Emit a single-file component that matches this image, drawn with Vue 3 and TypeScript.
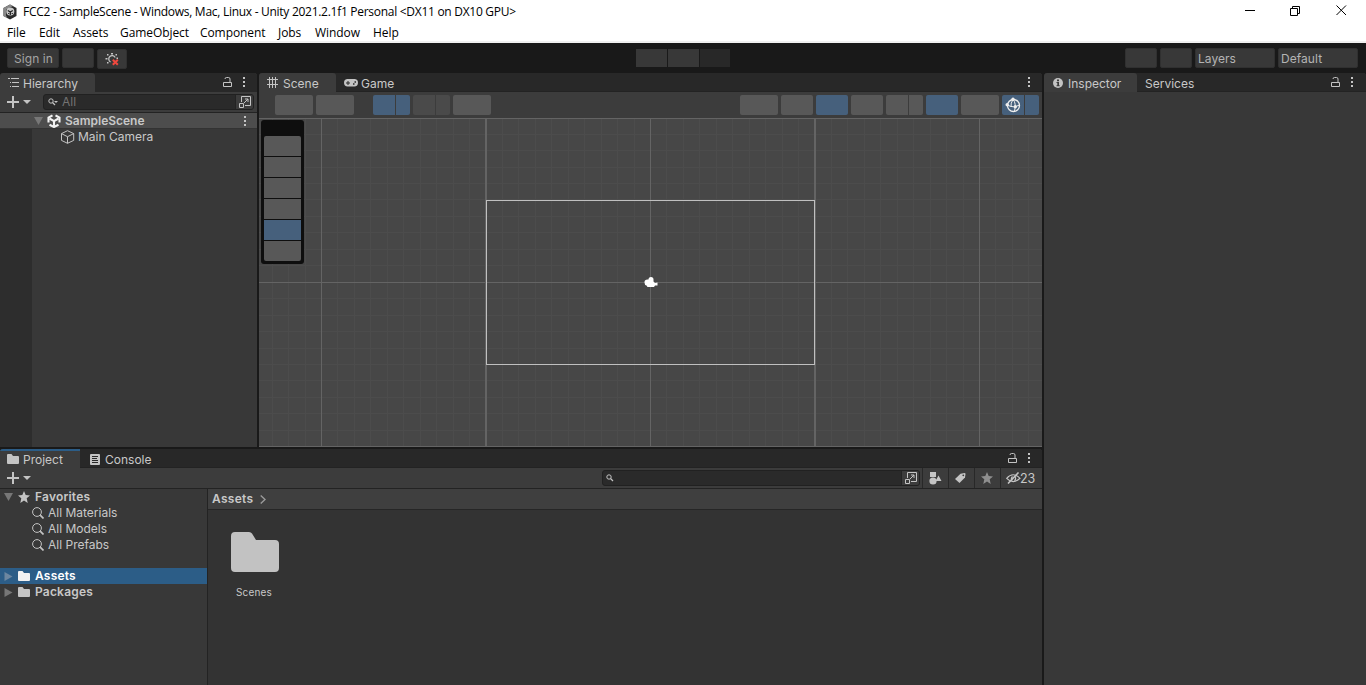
<script setup lang="ts">
interface Btn { w: number; gap: number; tone: string }

const menus = [
  { label: 'File', w: 32 }, { label: 'Edit', w: 34 }, { label: 'Assets', w: 47 },
  { label: 'GameObject', w: 80 }, { label: 'Component', w: 78 }, { label: 'Jobs', w: 37 },
  { label: 'Window', w: 58 }, { label: 'Help', w: 40 },
]

const leftTools: Btn[] = [
  { w: 38, gap: 0, tone: 'grey' }, { w: 38, gap: 3, tone: 'grey' },
  { w: 22, gap: 19, tone: 'blue l' }, { w: 14, gap: 1, tone: 'blue r' },
  { w: 22, gap: 3, tone: 'dim l' }, { w: 14, gap: 1, tone: 'dim r' },
  { w: 38, gap: 3, tone: 'grey' },
]
const rightTools: Btn[] = [
  { w: 38, gap: 0, tone: 'grey' }, { w: 32, gap: 3, tone: 'grey' },
  { w: 32, gap: 3, tone: 'blue' }, { w: 32, gap: 3, tone: 'grey' },
  { w: 22, gap: 3, tone: 'grey l' }, { w: 14, gap: 1, tone: 'grey r' },
  { w: 32, gap: 3, tone: 'blue' }, { w: 38, gap: 3, tone: 'grey' },
]
const sideTools = ['', '', '', '', 'on', '']
const searches = ['All Materials', 'All Models', 'All Prefabs']

// Scene grid, in view coordinates (origin at the viewport's top left corner)
const step = 16.45
const cx = 391.5
const cy = 164.2
const minorX = Array.from({ length: 49 }, (_, i) => Math.floor(cx + (i - 24) * step)).filter(v => v > 0 && v < 783)
const minorY = Array.from({ length: 21 }, (_, i) => Math.floor(cy + (i - 10) * step)).filter(v => v > 0 && v < 327)
const rootGrid = [
  { x: 62, w: 1 }, { x: 226, w: 2 }, { x: 391, w: 1 }, { x: 555, w: 2 }, { x: 720, w: 1 },
]
</script>

<template>
  <div class="app">
    <header class="titlebar">
      <svg class="logo" width="14" height="16" viewBox="0 0 14 16">
        <path d="M7 .5 13.500 4v8L7 15.500.5 12V4z" fill="#2a2a2a" />
        <path d="M.5 4 7 .5l3 1.600L3 5.500v6L4.500 14.200.5 12z" fill="#888" />
        <circle cx="7.300" cy="7.500" r="4" fill="#c9c9c9" />
        <path d="M7.300 8 4.800 6.500M7.300 8l2.500-1.500M7.300 8v3" stroke="#222" stroke-width="1.300" fill="none" />
        <path d="M5 9.500h1.300M8.600 9.500H10" stroke="#333" />
      </svg>
      <span class="title">FCC2 - SampleScene - Windows, Mac, Linux - Unity 2021.2.1f1 Personal &lt;DX11 on DX10 GPU&gt;</span>
      <svg class="winctl" width="106" height="14" viewBox="0 0 106 14" fill="none" stroke="#000" stroke-width="1">
        <path d="M0 7.500h10" />
        <path d="M45.500 5.500h7v7h-7zM47.500 5.500v-2h7v7h-2" />
        <path d="M91.500 2.500l9.500 9.500M101 2.500l-9.500 9.500" />
      </svg>
    </header>
    <nav class="menubar">
      <span v-for="m in menus" :key="m.label" class="menu" :style="{ width: m.w + 'px' }">{{ m.label }}</span>
    </nav>

    <section class="toolbar">
      <div class="group g1">
        <button class="tb sign">Sign in</button>
        <button class="tb w32"></button>
        <button class="tb bug">
          <svg width="16" height="16" viewBox="0 0 16 16">
            <path d="M11.200 6.500A3.400 3.400 0 1 0 6.500 11" fill="none" stroke="#c4c4c4" stroke-width="1.300" />
            <path d="M7 2h2v1.500H7zM3 3h1.500v1.500H3zM11.500 3H13v1.500h-1.500zM1.500 7h2v1.500h-2zM12.500 6.500h1.500V8h-1.500zM3 11h1.500v1.500H3z" fill="#c4c4c4" />
            <path d="M8.800 8.800l5 5M13.800 8.800l-5 5" stroke="#f0483e" stroke-width="2" />
          </svg>
        </button>
      </div>
      <div class="group play"><i></i><i></i><i class="off"></i></div>
      <div class="group g3">
        <button class="tb w32"></button>
        <button class="tb w32"></button>
        <button class="tb drop">Layers</button>
        <button class="tb drop def">Default</button>
      </div>
    </section>

    <main class="docks">
      <div class="left">
        <div class="upper">
          <section class="panel hierarchy">
            <div class="tabs">
              <div class="tab active th">
                <svg width="11" height="10" viewBox="0 0 11 10" fill="#c4c4c4"><path d="M0 0h2v1H0zM3 0h8v1H3zM2 4h1v1H2zM4 4h7v1H4zM2 8h1v1H2zM4 8h7v1H4z" /></svg>
                <span>Hierarchy</span>
              </div>
              <span class="fill"></span>
              <svg class="lock" width="9" height="11" viewBox="0 0 9 11" fill="none" stroke="#c4c4c4"><path d="M.5 5.500h8v4h-8zM7 5.500V2Q7 .5 5.500 .5H3.500Q2 .5 2 2" /></svg>
              <svg class="dots" width="3" height="11" viewBox="0 0 3 11" fill="#c4c4c4"><path d="M0 0h2v2H0zM0 4h2v2H0zM0 8h2v2H0z" /></svg>
            </div>
            <div class="bar">
              <svg class="plus" width="25" height="12" viewBox="0 0 25 12" fill="#c4c4c4"><path d="M5 0h2v5h5v2H7v5H5V7H0V5h5zM16 4h8l-4 4z" /></svg>
              <div class="search">
                <svg width="10" height="8" viewBox="0 0 10 8"><circle cx="3" cy="3" r="2.200" fill="none" stroke="#c4c4c4" /><path d="M4.500 4.500 7 7" stroke="#c4c4c4" stroke-width="1.300" /><path d="M6 3h4L8 5z" fill="#c4c4c4" /></svg>
                <span>All</span>
                <div class="pop"><svg width="12" height="12" viewBox="0 0 12 12" fill="none" stroke="#c4c4c4"><path d="M2.500 6V.5h9v9H6M.5 7.500h4v4h-4zM5 7l4-4M6 3h3v3" /></svg></div>
              </div>
            </div>
            <div class="row scene-row">
              <svg class="fold" width="9" height="8" viewBox="0 0 9 8"><path d="M0 0h9L4.500 8z" fill="#777" /></svg>
              <svg class="unity" width="14" height="14" viewBox="0 0 14 14" fill="none" stroke="#f2f2f2" stroke-width="2.100">
                <path d="M5.500 1.300 1.500 3.700V8.500M8.500 1.300l4 2.400V8.500M2.500 10.700l4.500 2.300 4.500-2.300" />
                <path d="M7 7.200V12.500M7 7.200 2.500 4.500M7 7.200l4.500-2.700" />
              </svg>
              <span>SampleScene</span>
              <svg class="dots" width="3" height="11" viewBox="0 0 3 11" fill="#c4c4c4"><path d="M0 0h2v2H0zM0 4h2v2H0zM0 8h2v2H0z" /></svg>
            </div>
            <div class="tree">
              <div class="gutter"></div>
              <div class="node">
                <svg width="14" height="14" viewBox="0 0 14 14" fill="none" stroke="#c4c4c4"><path d="M6.500 .7 12.700 3.600v6.800L6.500 13.300.5 10.400V3.600zM.5 3.600 6.500 6.700l6.200-3.100M6.500 6.700v6.600" /></svg>
                <span>Main Camera</span>
              </div>
            </div>
          </section>

          <section class="panel scene">
            <div class="tabs">
              <div class="tab active ts">
                <svg width="11" height="11" viewBox="0 0 11 11" stroke="#c4c4c4"><path d="M2.500 0v11M5.500 0v11M8.500 0v11M0 2.500h11M0 7.500h11" /></svg>
                <span>Scene</span>
              </div>
              <div class="tab tg">
                <svg width="14" height="8" viewBox="0 0 14 8"><rect width="14" height="7.500" rx="3.700" fill="#c4c4c4" /><path d="M4 2v4M2 4h4" stroke="#282828" /><path d="M9 5h1.500M10.500 3H12" stroke="#282828" stroke-width="1.500" /></svg>
                <span>Game</span>
              </div>
              <span class="fill"></span>
              <svg class="dots" width="3" height="11" viewBox="0 0 3 11" fill="#c4c4c4"><path d="M0 0h2v2H0zM0 4h2v2H0zM0 8h2v2H0z" /></svg>
            </div>
            <div class="scene-tools">
              <i v-for="(b, i) in leftTools" :key="'l' + i" class="btn" :class="b.tone" :style="{ width: b.w + 'px', marginLeft: b.gap + 'px' }"></i>
              <span class="fill"></span>
              <i v-for="(b, i) in rightTools" :key="'r' + i" class="btn" :class="b.tone" :style="{ width: b.w + 'px', marginLeft: b.gap + 'px' }"></i>
              <i class="btn blue l gizmo">
                <svg width="16" height="16" viewBox="0 0 16 16" fill="none" stroke="#eee">
                  <circle cx="8.500" cy="8.500" r="6" stroke-width="1.300" />
                  <path d="M8 2.500Q11.500 6 9.500 14M2.500 8Q8 11.500 14.500 8M8 2.500Q5.500 6 6 10" />
                  <g fill="#eee" stroke="none"><circle cx="8" cy="2.300" r="1.700" /><circle cx="2.200" cy="7.700" r="1.700" /><circle cx="10.300" cy="9.800" r="1.700" /></g>
                </svg>
              </i>
              <i class="btn blue r last"></i>
            </div>
            <div class="view">
              <svg class="grid" width="783" height="329" viewBox="0 0 783 329" shape-rendering="crispEdges">
                <g fill="#4c4c4c">
                  <rect v-for="x in minorX" :key="'x' + x" :x="x" y="0" width="1" height="329" />
                  <rect v-for="y in minorY" :key="'y' + y" x="0" :y="y" width="783" height="1" />
                </g>
                <g fill="#646464">
                  <rect v-for="l in rootGrid" :key="'m' + l.x" :x="l.x" y="0" :width="l.w" height="329" />
                  <rect x="0" y="0" width="783" height="1" />
                  <rect x="0" y="164" width="783" height="1" />
                  <rect x="0" y="328" width="783" height="1" />
                </g>
                <rect x="227.500" y="82.500" width="328" height="164" fill="none" stroke="#c0c0c0" />
                <path d="M385.500 164q0-2.500 3-2.500h1q0-2.500 2.500-2.500t2.500 2.500v2l1.500 1.500 2.500-.5v3h-2.500l-1 1.500h-6.500l-1-1.500q-2-.5-2-3z" fill="#fff" shape-rendering="auto" />
              </svg>
              <div class="overlay">
                <i v-for="(s, i) in sideTools" :key="i" :class="s"></i>
              </div>
            </div>
          </section>
        </div>

        <section class="panel project">
          <div class="tabs">
            <div class="tab active tp">
              <svg width="12" height="10" viewBox="0 0 12 10"><path d="M0 1q0-1 1-1h3.500L6 2h5q1 0 1 1v6q0 1-1 1H1q-1 0-1-1z" fill="#c4c4c4" /></svg>
              <span>Project</span>
            </div>
            <div class="tab tc">
              <svg width="10" height="11" viewBox="0 0 10 11"><rect width="10" height="11" rx="1" fill="#c4c4c4" /><path d="M2 2.500h6M2 4.500h5M2 6.500h6M2 8.500h6" stroke="#282828" /></svg>
              <span>Console</span>
            </div>
            <span class="fill"></span>
            <svg class="lock" width="9" height="11" viewBox="0 0 9 11" fill="none" stroke="#c4c4c4"><path d="M.5 5.500h8v4h-8zM7 5.500V2Q7 .5 5.500 .5H3.500Q2 .5 2 2" /></svg>
            <svg class="dots" width="3" height="11" viewBox="0 0 3 11" fill="#c4c4c4"><path d="M0 0h2v2H0zM0 4h2v2H0zM0 8h2v2H0z" /></svg>
          </div>
          <div class="bar pbar">
            <svg class="plus" width="25" height="12" viewBox="0 0 25 12" fill="#c4c4c4"><path d="M5 0h2v5h5v2H7v5H5V7H0V5h5zM16 4h8l-4 4z" /></svg>
            <span class="fill"></span>
            <div class="search psearch">
              <svg width="10" height="8" viewBox="0 0 10 8"><circle cx="3" cy="3" r="2.200" fill="none" stroke="#c4c4c4" /><path d="M4.500 4.500 7 7" stroke="#c4c4c4" stroke-width="1.300" /></svg>
              <div class="pop"><svg width="12" height="12" viewBox="0 0 12 12" fill="none" stroke="#c4c4c4"><path d="M2.500 6V.5h9v9H6M.5 7.500h4v4h-4zM5 7l4-4M6 3h3v3" /></svg></div>
            </div>
            <div class="cell first"><svg width="13" height="13" viewBox="0 0 13 13" fill="#c4c4c4"><path d="M1 0h6v5H1zM9.500 3.500 12.500 9h-6z" /><circle cx="4" cy="9" r="3.600" /></svg></div>
            <div class="cell"><svg width="11" height="10" viewBox="0 0 11 10"><path d="M5.500.7 9.500 0q1 0 1 1L10 4.500 4.500 10 0 6z" fill="#c4c4c4" /><circle cx="8.300" cy="2.300" r=".9" fill="#3c3c3c" /></svg></div>
            <div class="cell"><svg width="12" height="12" viewBox="0 0 12 12"><path d="M6 0 7.700 4.100 12 4.500 8.700 7.300 9.700 12 6 9.400 2.300 12 3.300 7.300 0 4.500 4.300 4.100z" fill="#8e8e8e" /></svg></div>
            <div class="cell eye">
              <svg width="15" height="12" viewBox="0 0 15 12" fill="none" stroke="#c4c4c4" stroke-width="1.200"><path d="M.7 6.300Q7-.8 14 6.300 7 12.800 .7 6.300z" /><path d="M6 8.500Q4.500 6.500 6.500 4.500M9 4.500Q10.500 7 8.500 8.800" /><path d="M12.500.5 2 11.500" stroke-width="1.600" /></svg>
              <span>23</span>
            </div>
          </div>
          <div class="pbody">
            <aside class="folders">
              <div class="frow">
                <svg class="arrow" width="9" height="8" viewBox="0 0 9 8"><path d="M0 0h9L4.500 8z" fill="#777" /></svg>
                <svg width="12" height="12" viewBox="0 0 12 12"><path d="M6 0 7.700 4.100 12 4.500 8.700 7.300 9.700 12 6 9.400 2.300 12 3.300 7.300 0 4.500 4.300 4.100z" fill="#c4c4c4" /></svg>
                <b>Favorites</b>
              </div>
              <div v-for="s in searches" :key="s" class="frow sub">
                <svg width="12" height="12" viewBox="0 0 12 12" fill="none" stroke="#c4c4c4"><circle cx="5" cy="5" r="4.400" /><path d="M8.200 8.200 11.500 11.500" stroke-width="1.700" /></svg>
                <span>{{ s }}</span>
              </div>
              <div class="frow sel">
                <svg class="arrow" width="8" height="9" viewBox="0 0 8 9"><path d="M0 0v9l8-4.500z" fill="#6d87a0" /></svg>
                <svg width="12" height="10" viewBox="0 0 12 10"><path d="M0 1q0-1 1-1h3.500L6 2h5q1 0 1 1v6q0 1-1 1H1q-1 0-1-1z" fill="#f2f2f2" /></svg>
                <b>Assets</b>
              </div>
              <div class="frow">
                <svg class="arrow" width="8" height="9" viewBox="0 0 8 9"><path d="M0 0v9l8-4.500z" fill="#777" /></svg>
                <svg width="12" height="10" viewBox="0 0 12 10"><path d="M0 1q0-1 1-1h3.500L6 2h5q1 0 1 1v6q0 1-1 1H1q-1 0-1-1z" fill="#c4c4c4" /></svg>
                <b>Packages</b>
              </div>
            </aside>
            <div class="content">
              <div class="crumb"><b>Assets</b><svg width="6" height="9" viewBox="0 0 6 9" fill="none" stroke="#9a9a9a" stroke-width="1.400"><path d="M.7.5 5 4.500.7 8.500" /></svg></div>
              <div class="asset">
                <svg width="48" height="40" viewBox="0 0 48 40"><path d="M0 4Q0 0 4 0H18q2 0 3 1.500L25 8H44q4 0 4 4V36q0 4-4 4H4q-4 0-4-4z" fill="#c2c2c2" /></svg>
                <span>Scenes</span>
              </div>
            </div>
          </div>
        </section>
      </div>

      <section class="panel inspector">
        <div class="tabs">
          <div class="tab active ti">
            <svg width="10" height="10" viewBox="0 0 10 10"><circle cx="5" cy="5" r="5" fill="#c4c4c4" /><path d="M4 1.500h2v1.700H4zM3.500 4H6v3.200h.7v1H3.500v-1h.8V5h-.8z" fill="#3c3c3c" /></svg>
            <span>Inspector</span>
          </div>
          <div class="tab tv"><span>Services</span></div>
          <span class="fill"></span>
          <svg class="lock" width="9" height="11" viewBox="0 0 9 11" fill="none" stroke="#c4c4c4"><path d="M.5 5.500h8v4h-8zM7 5.500V2Q7 .5 5.500 .5H3.500Q2 .5 2 2" /></svg>
          <svg class="dots" width="3" height="11" viewBox="0 0 3 11" fill="#c4c4c4"><path d="M0 0h2v2H0zM0 4h2v2H0zM0 8h2v2H0z" /></svg>
        </div>
      </section>
    </main>
  </div>
</template>

<style>
body { background: #191919; overflow: hidden; }
</style>

<style scoped>
* { box-sizing: border-box; }
svg { flex: none; display: block; }
.app { width: 1366px; height: 685px; display: flex; flex-direction: column; overflow: hidden; background: #191919; color: #c8c8c8; font: 12px/16px Inter, "Liberation Sans", sans-serif; letter-spacing: 0; }
.fill { flex: 1; }
.titlebar { height: 24px; flex: none; background: #fff; display: flex; align-items: center; padding-left: 3px; color: #000; font: 12px/16px "Open Sans", "Noto Sans", sans-serif; }
.logo { margin-right: 6px; }
.title { white-space: nowrap; flex: 1; letter-spacing: -0.28px; }
.winctl { margin-right: 15px; align-self: flex-start; margin-top: 3px; }
.menubar { height: 19px; flex: none; background: #fff; border-bottom: 2px solid #f0f0f0; display: flex; padding-left: 7px; color: #000; font: 12px/17px "Open Sans", "Noto Sans", sans-serif; letter-spacing: -0.08px; }
.menu { white-space: nowrap; }
.toolbar { height: 30px; flex: none; display: flex; padding-top: 5px; }
.group { display: flex; }
.g1 { width: 636px; padding-left: 7px; gap: 3px; }
.tb { height: 20px; padding: 0; border: 1px solid #303030; border-radius: 2px; background: #383838; color: #b4b4b4; font: inherit; letter-spacing: 0.05px; line-height: 19px; }
.sign { width: 52px; color: #a4a4a4; padding-left: 1px; }
.w32 { width: 32px; }
.bug { width: 30px; margin-top: 1px; display: flex; align-items: center; justify-content: center; }
.play { gap: 1px; padding-top: 1px; }
.play i { width: 31px; height: 18px; background: #383838; }
.play i.off { width: 30px; background: #282828; }
.g3 { margin-left: 395px; gap: 3px; }
.drop { width: 80px; text-align: left; padding-left: 2px; }
.docks { flex: 1; display: flex; gap: 2px; min-height: 0; }
.left { width: 1042px; display: flex; flex-direction: column; gap: 2px; }
.upper { height: 374px; display: flex; gap: 2px; }
.panel { background: #383838; display: flex; flex-direction: column; overflow: hidden; border-radius: 3px 3px 0 0; }
.tabs { height: 19px; flex: none; display: flex; background: #282828; border-bottom: 1px solid #232323; }
.tab { display: flex; align-items: center; height: 19px; padding-top: 2px; white-space: nowrap; }
.tab svg { margin-top: -2px; }
.tab.active { background: #3c3c3c; border-radius: 3px 3px 0 0; }
.lock { margin: 4px 11px 0 0; }
.dots { margin: 4px 11px 0 0; }
.bar { height: 21px; flex: none; display: flex; background: #3c3c3c; border-bottom: 1px solid #232323; }
.plus { margin: 4px 11px 0 7px; }
.search { flex: 1; height: 16px; margin: 2px 3px 0 0; background: #2a2a2a; border: 1px solid #212121; border-radius: 3px; display: flex; align-items: center; padding-left: 4px; color: #737373; overflow: hidden; line-height: 14px; }
.search span { margin-left: 4px; font-size: 12px; }
.pop { margin-left: auto; width: 18px; height: 16px; background: #3c3c3c; border-left: 1px solid #232323; display: flex; align-items: center; justify-content: center; }
.hierarchy { width: 257px; }
.hierarchy .tabs { border-bottom: 0; }
.th { width: 95px; padding-left: 8px; }
.th span { margin-left: 4px; }
.row { height: 16px; flex: none; display: flex; align-items: center; }
.scene-row { background: #4d4d4d; border-bottom: 1px solid #333; font-weight: 600; padding-left: 34px; }
.scene-row .unity { margin: 0 4px 0 4px; }
.scene-row .dots { margin: 1px 10px 0 auto; }
.tree { flex: 1; display: flex; }
.gutter { width: 32px; background: #2d2d2d; }
.node { display: flex; align-items: center; height: 16px; margin: 0 0 0 29px; }
.node span { margin-left: 3px; }
.scene { width: 783px; }
.ts { width: 77px; padding-left: 8px; }
.ts span { margin-left: 5px; }
.tg { padding-left: 8px; }
.tg span { margin-left: 3px; }
.scene-tools { height: 26px; flex: none; background: #3c3c3c; display: flex; padding: 3px 3px 0 16px; }
.btn { height: 20px; border-radius: 2px; background: #585858; flex: none; }
.btn.blue { background: #46607c; }
.btn.dim { background: #4a4a4a; }
.btn.l { border-radius: 2px 0 0 2px; }
.btn.r { border-radius: 0 2px 2px 0; }
.gizmo { width: 22px; margin-left: 3px; display: flex; align-items: center; justify-content: center; }
.last { width: 14px; margin-left: 1px; }
.view { height: 329px; background: #474747; position: relative; }
.overlay { position: absolute; left: 2px; top: 2px; width: 43px; height: 144px; padding: 16px 3px 0; background: #0e0e0e; border-radius: 3px; display: flex; flex-direction: column; gap: 1px; }
.overlay i { height: 20px; background: #585858; }
.overlay i.on { background: #46607c; }
.overlay i:first-child { border-radius: 2px 2px 0 0; }
.overlay i:last-child { border-radius: 0 0 2px 2px; }
.project { flex: 1; }
.tp { width: 80px; padding-left: 7px; }
.tab.tp { border-top: 2px solid #2c5d87; padding-top: 1px; border-radius: 0; }
.tp span, .tc span { margin-left: 4px; }
.tc { padding-left: 10px; padding-top: 3px; }
.tc span { margin-left: 5px; }
.pbar { height: 21px; }
.psearch { flex: none; width: 318px; margin: 2px 2px 0 0; padding-left: 3px; }
.cell { width: 26px; border-left: 1px solid #282828; display: flex; align-items: center; justify-content: center; padding-right: 2px; }
.cell.first { padding-right: 0; }
.cell.eye { width: 42px; justify-content: flex-start; padding: 0 0 0 5px; }
.eye span { font-size: 12.5px; margin-left: -1px; padding-top: 1px; }
.pbody { flex: 1; display: flex; }
.folders { width: 207px; }
.frow { height: 16px; display: flex; align-items: center; padding-left: 4px; white-space: nowrap; }
.frow .arrow { width: 9px; margin-right: 5px; }
.frow b { margin-left: 5px; font-weight: 600; letter-spacing: 0.2px; }
.frow.sub { padding-left: 32px; }
.frow.sub span { margin-left: 4px; }
.frow.sel { margin-top: 15px; background: #2c5d87; color: #fff; }
.content { flex: 1; background: #333; border-left: 1px solid #232323; }
.crumb { height: 21px; background: #3f3f3f; border-bottom: 1px solid #262626; display: flex; align-items: center; padding-left: 4px; }
.crumb b { font-weight: 600; margin-right: 7px; letter-spacing: 0.3px; }
.asset { width: 92px; display: flex; flex-direction: column; align-items: center; margin-top: 22px; padding-left: 2px; font-size: 10px; }
.asset span { margin-top: 12px; margin-left: -2px; letter-spacing: 0.2px; }
.inspector { flex: 1; }
.inspector .dots { margin-right: 12px; }
.ti { width: 93px; padding-left: 9px; }
.ti span { margin-left: 5px; }
.tv { padding-left: 8px; }
</style>
